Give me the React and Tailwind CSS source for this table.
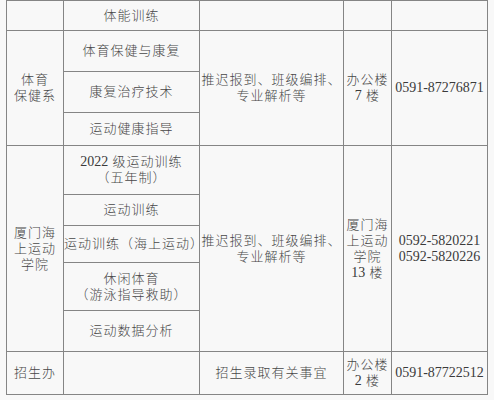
import React from "react";

const cjk = { fontFamily: '"Liberation Serif", "Noto Sans CJK SC", serif' };

function Cell({ className = "", children }) {
  return (
    <div
      className={
        "bg-[#f8f8f8] flex flex-col items-center justify-center text-center text-[13px] leading-[16px] tracking-[1px] text-[#474747] font-light " +
        className
      }
    >
      {children}
    </div>
  );
}

function Num({ children }) {
  return <span className="text-[14px] tracking-[0px] font-normal text-[#3a3a3a]">{children}</span>;
}

export default function App() {
  return (
    <div className="w-[494px] h-[400px] bg-[#f8f8f8] overflow-hidden" style={cjk}>
      <div
        className="ml-[6px] w-[482px] grid gap-px p-px bg-[#858585]"
        style={{
          gridTemplateColumns: "56px 135px 143px 47px 95px",
          gridTemplateRows: "29px 40px 40px 32px 48px 30px 36px 47px 40px 42px",
        }}
      >
        {/* row 0 */}
        <Cell className="col-start-1 row-start-1" />
        <Cell className="col-start-2 row-start-1">体能训练</Cell>
        <Cell className="col-start-3 row-start-1" />
        <Cell className="col-start-4 row-start-1" />
        <Cell className="col-start-5 row-start-1" />

        {/* section 体育保健系 */}
        <Cell className="col-start-1 row-start-2 row-span-3">
          <div>体育</div>
          <div>保健系</div>
        </Cell>
        <Cell className="col-start-2 row-start-2">体育保健与康复</Cell>
        <Cell className="col-start-2 row-start-3">康复治疗技术</Cell>
        <Cell className="col-start-2 row-start-4">运动健康指导</Cell>
        <Cell className="col-start-3 row-start-2 row-span-3">
          <div>推迟报到、班级编排、</div>
          <div>专业解析等</div>
        </Cell>
        <Cell className="col-start-4 row-start-2 row-span-3 tracking-[0.5px]">
          <div>办公楼</div>
          <div>
            <Num>7</Num> 楼
          </div>
        </Cell>
        <Cell className="col-start-5 row-start-2 row-span-3">
          <Num>0591-87276871</Num>
        </Cell>

        {/* section 厦门海上运动学院 */}
        <Cell className="col-start-1 row-start-5 row-span-5">
          <div>厦门海</div>
          <div>上运动</div>
          <div>学院</div>
        </Cell>
        <Cell className="col-start-2 row-start-5">
          <div>
            <Num>2022</Num> 级运动训练
          </div>
          <div>（五年制）</div>
        </Cell>
        <Cell className="col-start-2 row-start-6">运动训练</Cell>
        <Cell className="col-start-2 row-start-7 tracking-[0px]">运动训练（海上运动）</Cell>
        <Cell className="col-start-2 row-start-8">
          <div>休闲体育</div>
          <div>（游泳指导救助）</div>
        </Cell>
        <Cell className="col-start-2 row-start-9">运动数据分析</Cell>
        <Cell className="col-start-3 row-start-5 row-span-5">
          <div>推迟报到、班级编排、</div>
          <div>专业解析等</div>
        </Cell>
        <Cell className="col-start-4 row-start-5 row-span-5 tracking-[0.5px]">
          <div>厦门海</div>
          <div>上运动</div>
          <div>学院</div>
          <div>
            <Num>13</Num> 楼
          </div>
        </Cell>
        <Cell className="col-start-5 row-start-5 row-span-5">
          <Num>0592-5820221</Num>
          <Num>0592-5820226</Num>
        </Cell>

        {/* 招生办 */}
        <Cell className="col-start-1 row-start-10">招生办</Cell>
        <Cell className="col-start-2 row-start-10" />
        <Cell className="col-start-3 row-start-10">招生录取有关事宜</Cell>
        <Cell className="col-start-4 row-start-10 tracking-[0.5px]">
          <div>办公楼</div>
          <div>
            <Num>2</Num> 楼
          </div>
        </Cell>
        <Cell className="col-start-5 row-start-10">
          <Num>0591-87722512</Num>
        </Cell>
      </div>
    </div>
  );
}
